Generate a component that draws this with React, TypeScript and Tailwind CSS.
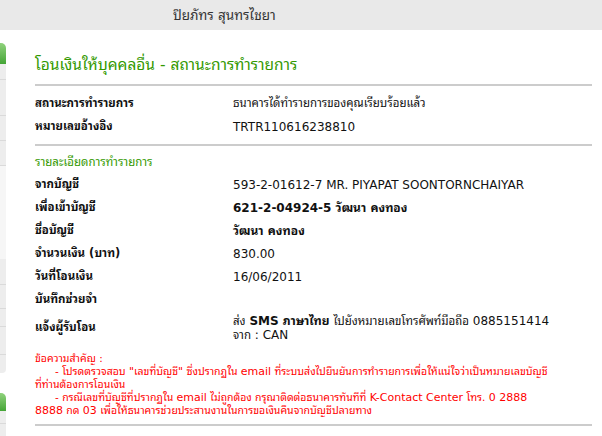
const font = {
  fontFamily: "'DejaVu Sans', Tahoma, 'Noto Sans Thai Looped', 'Noto Sans Thai', sans-serif",
};

const sideTabs = [
  { h: 13, c: "bg-white" },
  { h: 21, c: "bg-gradient-to-b from-[#8fd27c] to-[#44a536] rounded-tr-[5px]" },
  { h: 16, c: "bg-[#ededed] border-b border-[#dadada]" },
  { h: 36, c: "bg-[#ededed] border-b border-[#dadada]" },
  { h: 25, c: "bg-[#ededed] border-b border-[#dadada]" },
  { h: 25, c: "bg-[#ededed] border-b border-[#dadada]" },
  { h: 93, c: "bg-[#f6f6f6]" },
  { h: 26, c: "bg-[#ededed] border-b border-[#dadada]" },
  { h: 24, c: "bg-[#ededed] border-b border-[#dadada]" },
  { h: 18, c: "bg-[#ededed] border-b border-[#dadada]" },
  { h: 28, c: "bg-[#ededed] border-b border-[#dadada]" },
  { h: 18, c: "bg-[#ededed] rounded-br-[4px]" },
  { h: 20, c: "bg-white" },
  { h: 18, c: "bg-gradient-to-b from-[#8fd27c] to-[#44a536] rounded-tr-[5px]" },
  { h: 13, c: "bg-[#ededed] border-b border-[#dadada]" },
  { h: 12, c: "bg-[#ededed]" },
];

// Thai runs in the fallback font come out wider than Tahoma, so they get a smaller size
function T({ children }: { children: React.ReactNode }) {
  return <span className="text-[11.5px]">{children}</span>;
}

// latin bits inside the red notes
function L({ children }: { children: React.ReactNode }) {
  return <span className="text-[11px]">{children}</span>;
}

function Row({ label, children, bold }: { label: string; children?: React.ReactNode; bold?: boolean }) {
  return (
    <div className="flex h-[23px] items-center text-[12px] text-[#111]">
      <div className="w-[198px] text-[11.5px] font-bold">{label}</div>
      <div className={bold ? "font-bold" : ""}>{children}</div>
    </div>
  );
}

export default function App() {
  return (
    <div className="h-[436px] w-[602px] overflow-hidden bg-white" style={font}>
      <div className="flex h-[30px] items-center bg-[#e9e9e9] pl-[173px] text-[13.5px] text-[#333]">
        ปิยภัทร สุนทรไชยา
      </div>

      <div className="flex">
        <div className="w-[6px] shrink-0">
          {sideTabs.map((t, i) => (
            <div key={i} className={t.c} style={{ height: t.h }} />
          ))}
        </div>

        <div className="flex-1 pl-[29px] pr-[10px]">
          <div className="mt-[26px] flex h-[20px] items-center text-[15.5px] text-[#339900]">
            โอนเงินให้บุคคลอื่น - สถานะการทำรายการ
          </div>
          <div className="mt-[8px] h-[2px] bg-[#cccccc]" />

          <div className="mt-[6px]">
            <Row label="สถานะการทำรายการ">
              <T>ธนาคารได้ทำรายการของคุณเรียบร้อยแล้ว</T>
            </Row>
            <Row label="หมายเลขอ้างอิง">TRTR110616238810</Row>
          </div>
          <div className="mt-[6px] h-[2px] bg-[#cccccc]" />

          <div className="mt-[7px] flex h-[20px] items-center text-[11.5px] text-[#339900]">
            รายละเอียดการทำรายการ
          </div>

          <div>
            <Row label="จากบัญชี">593-2-01612-7 MR. PIYAPAT SOONTORNCHAIYAR</Row>
            <Row label="เพื่อเข้าบัญชี" bold>
              621-2-04924-5 วัฒนา คงทอง
            </Row>
            <Row label="ชื่อบัญชี" bold>
              วัฒนา คงทอง
            </Row>
            <Row label="จำนวนเงิน (บาท)">830.00</Row>
            <Row label="วันที่โอนเงิน">16/06/2011</Row>
            <Row label="บันทึกช่วยจำ" />
            <div className="mt-[3px] flex text-[12px] leading-[14px] text-[#111]">
              <div className="w-[198px] pt-[6px] text-[11.5px] font-bold">แจ้งผู้รับโอน</div>
              <div className="whitespace-nowrap">
                <div>
                  <T>ส่ง</T> <b>SMS ภาษาไทย</b> <T>ไปยังหมายเลขโทรศัพท์มือถือ</T> 0885151414
                </div>
                <div>
                  <T>จาก</T> : CAN
                </div>
              </div>
            </div>
          </div>

          <div className="mt-[10px] whitespace-nowrap text-[10.5px] leading-[13px] text-[#ff0000]">
            <div>ข้อความสำคัญ :</div>
            <div className="pl-[20px]">
              - โปรดตรวจสอบ <L>"</L>เลขที่บัญชี<L>"</L> ซึ่งปรากฏใน <L>email</L>{" "}
              ที่ระบบส่งไปยืนยันการทำรายการเพื่อให้แน่ใจว่าเป็นหมายเลขบัญชี
            </div>
            <div>ที่ท่านต้องการโอนเงิน</div>
            <div className="pl-[20px]">
              - กรณีเลขที่บัญชีที่ปรากฏใน <L>email</L> ไม่ถูกต้อง กรุณาติดต่อธนาคารทันทีที่{" "}
              <L>K-Contact Center</L> โทร. <L>0 2888</L>
            </div>
            <div>
              <L>8888</L> กด <L>03</L> เพื่อให้ธนาคารช่วยประสานงานในการขอเงินคืนจากบัญชีปลายทาง
            </div>
          </div>
          <div className="mt-[7px] h-[2px] bg-[#cccccc]" />
        </div>
      </div>
    </div>
  );
}
